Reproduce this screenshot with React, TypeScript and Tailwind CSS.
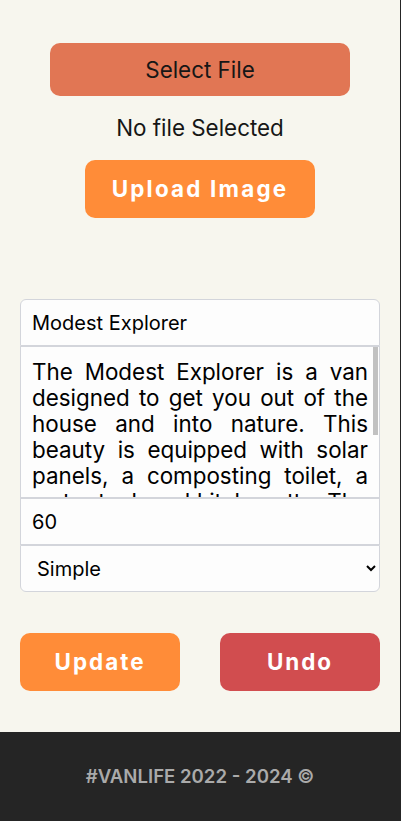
import { useState } from "react";

const description =
  "The Modest Explorer is a van designed to get you out of the house and into nature. This beauty is equipped with solar panels, a composting toilet, a water tank and kitchenette. The idea is that you can pack up your home and escape for a weekend or even longer!";

export default function App() {
  const [name, setName] = useState("Modest Explorer");
  const [desc, setDesc] = useState(description);
  const [price, setPrice] = useState("60");
  const [type, setType] = useState("simple");

  return (
    <div className="min-h-[821px] bg-[#252525]">
      <div className="w-[400px] min-h-[821px] flex flex-col bg-[#f7f6ee] font-['Inter','Liberation_Sans',sans-serif]">
        <main className="h-[732px] flex flex-col pt-[43px] px-5">
          <button className="mx-auto w-[300px] h-[53px] rounded-[10px] bg-[#e17654] text-[22.4px] text-[#161616]">
            Select File
          </button>
          <p className="mt-5 text-center text-[22.4px] leading-6 text-[#161616]">No file Selected</p>
          <button className="mx-auto mt-5 w-[230px] h-[58px] rounded-[10px] bg-[#ff8c38] text-[22.4px] font-bold tracking-[2.2px] text-white">
            Upload Image
          </button>

          {/* edit form */}
          <div className="mt-[81px] flex flex-col text-[20px] text-black">
            <input
              value={name}
              onChange={(e) => setName(e.target.value)}
              className="h-[47px] px-[11px] border border-[#d3d5db] rounded-t-[6px] bg-[#fdfdfd] outline-none"
            />
            <div className="relative h-[152px]">
              <textarea
                value={desc}
                onChange={(e) => setDesc(e.target.value)}
                className="w-full h-full resize-none pl-[11px] pr-[11px] pt-3 text-[22.4px] leading-[26px] text-justify border border-[#d3d5db] bg-[#fdfdfd] outline-none [scrollbar-width:none]"
              />
              <div className="absolute right-[2px] top-[1px] w-[5px] h-[88px] bg-[#c1c1c1]" />
            </div>
            <input
              value={price}
              onChange={(e) => setPrice(e.target.value)}
              className="h-[47px] px-[11px] border border-[#d3d5db] bg-[#fdfdfd] outline-none"
            />
            <select
              value={type}
              onChange={(e) => setType(e.target.value)}
              className="h-[47px] px-3 border border-[#d3d5db] rounded-b-[6px] bg-[#fdfdfd] outline-none"
            >
              <option value="simple">Simple</option>
              <option value="luxury">Luxury</option>
              <option value="rugged">Rugged</option>
            </select>
          </div>

          <div className="mt-[41px] flex justify-between">
            <button className="w-40 h-[58px] rounded-[10px] bg-[#ff8c38] text-[22.4px] font-bold tracking-[2px] text-white">
              Update
            </button>
            <button className="w-40 h-[58px] rounded-[10px] bg-[#d14d4f] text-[22.4px] font-bold tracking-[2px] text-white">
              Undo
            </button>
          </div>
        </main>
        <footer className="h-[89px] flex items-center justify-center bg-[#252525] text-[#aaaaaa] text-[18.6px] font-semibold">
          #VANLIFE 2022 - 2024 ©
        </footer>
      </div>
    </div>
  );
}
